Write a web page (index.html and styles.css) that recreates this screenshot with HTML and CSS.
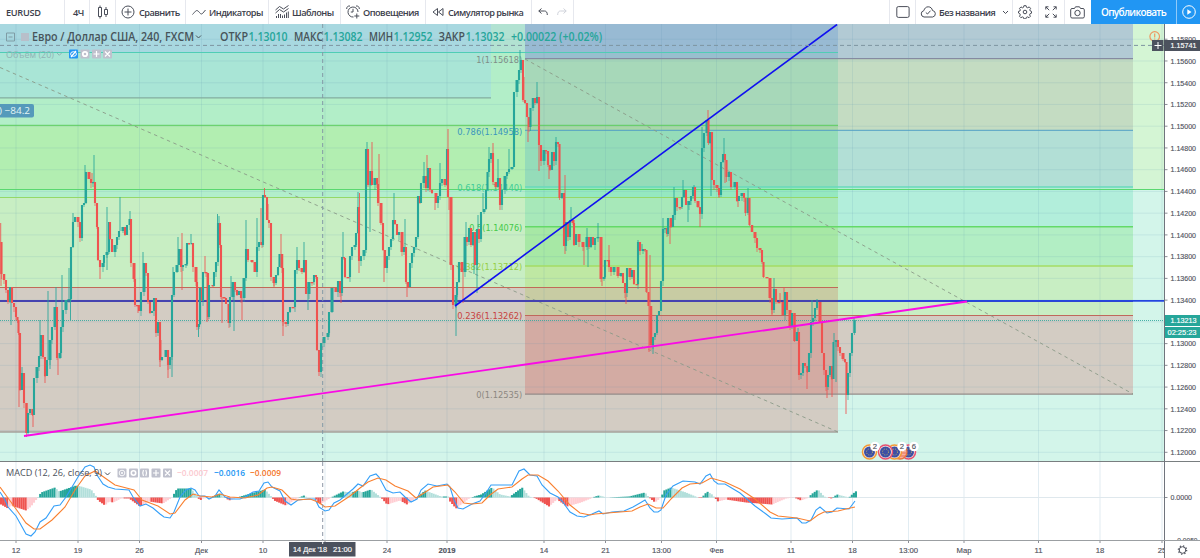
FILE: index.html
```html
<!DOCTYPE html>
<html lang="ru">
<head>
  <meta charset="UTF-8" />
  <meta name="viewport" content="width=device-width, initial-scale=1.0" />
  <title>EURUSD</title>
  <link rel="stylesheet" href="styles.css">
</head>
<body>
  <header class="toolbar">
    <div class="item symbol">EURUSD</div>
    <div class="item interval">4Ч</div>
    <div class="item style">
      <svg width="12" height="14" viewBox="0 0 12 14"><path d="M3 .5v2M3 11.5v2M1.5 2.5h3v9h-3zM9 2v2.500M9 9.500v2.500M7.500 4.500h3v5h-3z"/></svg>
    </div>
    <div class="item compare">
      <svg width="14" height="14" viewBox="0 0 14 14"><circle cx="7" cy="7" r="6"/><path d="M7 3.500v7M3.500 7h7"/></svg>
      <span>Сравнить</span>
    </div>
    <div class="item indicators">
      <svg width="14" height="8" viewBox="0 0 14 8"><path d="M.5 6.500C3 4 4 1.500 6 3s2.500 4 4.500 2.500L13.500 2"/></svg>
      <span>Индикаторы</span>
    </div>
    <div class="item templates">
      <svg width="14" height="14" viewBox="0 0 14 14"><path d="M.5 5l4-3.500 4 2.500 5-3.500M.5 8l4-3.500 4 2.500 5-3.500M1.500 13v-2M3.500 13v-4M5.500 13V9M7.500 13v-2.500M9.500 13V9.500M11.500 13V7.500M13.300 13V6.500"/></svg>
      <span>Шаблоны</span>
    </div>
    <div class="item alerts">
      <svg width="14" height="14" viewBox="0 0 14 14"><path d="M12 7a5 5 0 1 0-4.500 5M7 3.800V7H4.800M.7 4C.5 2 2 .7 4 1M10 1c2-.3 3.500 1 3.300 3M10.800 8.500v5M8.300 11h5"/></svg>
      <span>Оповещения</span>
    </div>
    <div class="item replay">
      <svg width="12" height="10" viewBox="0 0 12 10"><path d="M5.500 1.500v7L1 5zM11 1.500v7L6.500 5z"/></svg>
      <span>Симулятор рынка</span>
    </div>
    <div class="item history">
      <svg width="10" height="8" viewBox="0 0 10 8"><path d="M3.500 .5L.8 3l2.700 2.500M.8 3h5.700C8.500 3 9.300 4.500 9.300 7"/></svg>
      <svg class="off" width="10" height="8" viewBox="0 0 10 8"><path d="M6.500 .5L9.200 3 6.500 5.500M9.200 3H3.500C1.500 3 .7 4.500 .7 7"/></svg>
    </div>
    <div class="item spacer"></div>
    <div class="item layout">
      <svg width="14" height="12" viewBox="0 0 14 12"><rect x=".8" y=".6" width="12.300" height="10.800" rx="1.500"/></svg>
    </div>
    <div class="item name">
      <svg width="17" height="12" viewBox="0 0 17 12"><path d="M4 11a3.200 3.200 0 0 1-.2-6.300C4.500 2.300 6 .8 8.200 .8c2.300 0 3.900 1.500 4.300 3.700a3.300 3.300 0 0 1 .2 6.500zM5.800 6.500L7.500 8l3-3.300"/></svg>
      <span>Без названия</span>
      <svg class="chevron" width="7" height="5" viewBox="0 0 7 5"><path d="M1 1l2.500 2.500L6 1"/></svg>
    </div>
    <div class="item settings">
      <svg width="14" height="14" viewBox="0 0 14 14"><path d="M5.900 .7h2.200l.4 1.600 1.200.5 1.500-.9 1.400 1.500-.8 1.400.5 1.200 1.200.4v1.800l-1.400.5-.5 1.200.8 1.400-1.400 1.400-1.400-.8-1.300.5-.4 1.500H5.900l-.4-1.500-1.200-.5-1.400.8-1.400-1.400.8-1.400-.5-1.200L.5 8V6.400l1.400-.4.4-1.200-.8-1.400L3 1.900l1.400.9 1.100-.5z"/><circle cx="7" cy="7" r="1.800"/></svg>
    </div>
    <div class="item full">
      <svg width="12" height="12" viewBox="0 0 12 12"><path d="M.8 3.500V.8h2.700M.8 .8l3.400 3.400M8.500 .8h2.700v2.700M11.200 .8L7.800 4.200M.8 8.500v2.700h2.700M.8 11.200l3.400-3.400M8.500 11.200h2.700V8.500M11.200 11.200L7.800 7.800"/></svg>
    </div>
    <div class="item camera">
      <svg width="15" height="13" viewBox="0 0 15 13"><path d="M2 2.500h2.500L5.500 .8h4l1 1.700H13c.8 0 1.300.5 1.300 1.300v6.900c0 .8-.5 1.300-1.300 1.300H2C1.200 12 .7 11.500 .7 10.700V3.800C.7 3 1.200 2.500 2 2.500z"/><circle cx="7.500" cy="7" r="2.700"/></svg>
    </div>
    <div class="item publish">Опубликовать</div>
    <div class="item play">
      <svg width="14" height="14" viewBox="0 0 14 14"><circle cx="7" cy="7" r="6.300"/><path class="solid" d="M5.300 4.300v5.400L9.500 7z"/></svg>
    </div>
  </header>

  <main class="chart">
    <svg class="pane" id="price" viewBox="0 24 1164 437" width="1164" height="437"></svg>
    <svg class="axis" id="priceAxis" viewBox="1164 24 36 437" width="36" height="437"></svg>
    <svg class="pane" id="macd" viewBox="0 461 1164 80" width="1164" height="80"></svg>
    <svg class="axis" id="macdAxis" viewBox="1164 461 36 80" width="36" height="80"></svg>
    <svg class="pane" id="time" viewBox="0 541 1164 17" width="1164" height="17"></svg>
    <svg class="axis" id="corner" viewBox="1164 541 36 17" width="36" height="17"></svg>
  </main>

  <script src="chart.js"></script>
</body>
</html>
```

FILE: styles.css
```css
* {
  box-sizing: border-box;
}
body {
  margin: 0;
  height: 558px;
  overflow: hidden;
  background: white;
  font-family: "Open Sans", "Noto Sans", sans-serif;
  color: #3c404b;
}
.toolbar {
  display: flex;
  height: 24px;
  font-size: 9.200px;
  font-weight: 600;
  letter-spacing: -0.520px;
}
.item {
  display: flex;
  align-items: center;
  gap: 4px;
  flex: none;
  padding-left: 6px;
  border-right: 1px solid #e6e8ee;
  white-space: nowrap;
}
.item svg {
  flex: none;
  fill: none;
  stroke: #4a4e59;
  stroke-width: 1;
}
.item svg.off {
  stroke: #cfd2da;
}
.symbol { width: 65px; letter-spacing: -0.300px; }
.interval { width: 25px; padding-left: 8px; }
.style { width: 26px; padding-left: 7px; }
.compare { width: 70px; padding-left: 5px; }
.indicators { width: 83px; gap: 3px; }
.templates { width: 72px; gap: 3px; }
.alerts { width: 85px; padding-left: 5px; gap: 3px; }
.replay { width: 106px; }
.history { width: 42px; padding-left: 6px; gap: 9px; }
.spacer { flex: 1; }
.layout { width: 26px; }
.name { width: 97px; padding-left: 4px; gap: 2px; }
.name .chevron { margin-left: auto; margin-right: 3px; }
.settings { width: 26px; padding-left: 5px; }
.full { width: 26px; }
.camera { width: 26px; padding-left: 5px; border: none; }
.publish {
  width: 86px;
  padding-left: 10px;
  background: #2196f3;
  border-color: #90caf9;
  color: white;
  font-size: 10px;
  letter-spacing: -0.680px;
}
.play {
  width: 23px;
  padding-left: 5px;
  background: #2196f3;
  border: none;
}
.play svg { stroke: white; }
.play .solid { fill: white; stroke: none; }

.chart {
  display: grid;
  grid-template-columns: 1164px 36px;
  grid-template-rows: 437px 80px 17px;
}
.chart svg {
  display: block;
  overflow: hidden;
}
.tick-label {
  font-family: "Liberation Sans", sans-serif;
  font-size: 7.700px;
  fill: #50535e;
  stroke: #50535e;
  stroke-width: 0.150px;
}
.light {
  fill: white;
  stroke: white;
}
.bold { font-weight: bold; }
.middle { text-anchor: middle; }
.fib {
  font-family: "DejaVu Sans", sans-serif;
  font-size: 8.500px;
  text-anchor: end;
}
.title {
  font-size: 11.800px;
  font-weight: 600;
}
.study {
  font-size: 9.600px;
  font-weight: 500;
}
.value { font-weight: 600; }
.line { fill: none; }
```

FILE: chart.js
```js
const NS = "http://www.w3.org/2000/svg";
const get = (id) => document.getElementById(id);

function add(parent, tag, attrs, text) {
  const el = document.createElementNS(NS, tag);
  for (const key in attrs) el.setAttribute(key, attrs[key]);
  if (text !== undefined) el.textContent = text;
  parent.appendChild(el);
  return el;
}
const rect = (p, x1, y1, x2, y2, fill) =>
  add(p, "rect", { x: x1, y: y1, width: x2 - x1, height: y2 - y1, fill });
const line = (p, x1, y1, x2, y2, stroke, width = 1, dash = "none") =>
  add(p, "line", { x1, y1, x2, y2, stroke, "stroke-width": width, "stroke-dasharray": dash });
// text stretched to a known width
const label = (p, x, y, cls, fill, text, width) => {
  const attrs = { x, y, class: cls };
  if (fill) attrs.fill = fill;
  if (width) { attrs.textLength = width; attrs.lengthAdjust = "spacingAndGlyphs"; }
  return add(p, "text", attrs, text);
};

const price = get("price"), priceAxis = get("priceAxis");
const macd = get("macd"), macdAxis = get("macdAxis");
const time = get("time"), corner = get("corner");
const priceY = (v) => 452.3 - (v - 1.12) * 10870;

const times = [
  [16, "12"], [78, "19"], [139.5, "26"], [201.5, "Дек"], [263, "10"], [325, ""],
  [387, "24"], [447, "2019"], [544, "14"], [605.5, "21"], [661.5, "13:00"],
  [716.500, "Фев"], [791, "11"], [852.5, "18"], [908.5, "13:00"], [964, "Мар"],
  [1038.5, "11"], [1100, "18"], [1162, "25"]
];

// fib zones: x range, then [top, colour] going down
const zones = [
  [0, 491, [[24, "#a8d8e0"], [53, "#a9e5d6"], [98, "#b2eec8"], [125, "#b2eeb1"], [190, "#b2eecb"], [197, "#c8eec3"], [288, "#d3ccc3"], [432, "#d3f5ea"]]],
  [491, 525, [[24, "#b2e2d2"], [53, "#b2eec8"], [125, "#b2eeb1"], [190, "#b2eecb"], [197, "#c8eec3"], [288, "#d3ccc3"], [432, "#d3f5ea"]]],
  [525, 838, [[24, "#98bad3"], [53, "#98bfce"], [59, "#a7d8b9"], [125, "#a7d8a7"], [130, "#95dcb9"], [187, "#95e8b8"], [190, "#95e8c0"], [197, "#a7e8b9"], [227, "#a7e8a5"], [266, "#bfe8a3"], [288, "#c8cca3"], [315, "#d3aba3"], [394, "#d3ccc3"], [432, "#d3f5ea"]]],
  [838, 1133, [[24, "#b2cad4"], [59, "#c4dcc2"], [130, "#b2dfd6"], [187, "#b2eed4"], [190, "#b2eedb"], [227, "#b2eec4"], [266, "#c8eec3"], [315, "#d3ccc3"], [394, "#d3f5ea"]]],
  [1133, 1164, [[24, "#d4f5d4"], [190, "#d3f5ea"]]]
];
for (const [x1, x2, rows] of zones) {
  rows.forEach(([top, fill], i) => {
    rect(price, x1, top, x2, rows[i + 1] ? rows[i + 1][0] : 461, fill);
  });
}

// grid
for (const [x] of times) {
  rect(price, x - 0.5, 24, x + 0.5, 461, "rgba(90,150,175,.14)");
  rect(macd, x - 0.5, 462, x + 0.5, 540, "#e1ecf2");
}
for (let v = 1.12; v < 1.1585; v += 0.002) {
  rect(price, 0, priceY(v) - 0.5, 1164, priceY(v) + 0.5, "rgba(90,150,175,.14)");
}

// fib levels
line(price, 0, 52.5, 838, 52.5, "#50cdb5");
line(price, 0, 97.8, 491, 97.8, "#83ad9f", 1.3);
line(price, 0, 125.3, 838, 125.3, "#5ccc60");
line(price, 0, 189.5, 1164, 189.5, "#5ad870");
line(price, 0, 197.5, 838, 197.5, "#95d868");
line(price, 0, 287.5, 838, 287.5, "#c06a58");
line(price, 0, 432, 838, 432, "#a5a29d", 1.4);
line(price, 525, 58.6, 1133, 58.6, "#858aa0", 1.2);
line(price, 525, 130.3, 1133, 130.3, "#529fc5");
line(price, 525, 187, 1133, 187, "#68d8bd", 1.4);
line(price, 525, 226.7, 1133, 226.7, "#64d968", 1.4);
line(price, 525, 266, 1133, 266, "#a4dc64", 1.4);
line(price, 525, 315.5, 1133, 315.5, "#c0685c", 1.2);
line(price, 525, 394.2, 1133, 394.2, "#958b89", 1.3);

line(price, 0, 67.5, 838, 432, "#8a9a88", 0.9, "3.500 3.500");
line(price, 525, 59, 1133, 394, "#8a9a88", 0.9, "3.500 3.500");
line(price, 0, 301, 1133, 301, "#4543b0", 1.9);
line(price, 838, 300.8, 1164, 300.8, "#2446e0", 1.8);
line(price, 0, 320.5, 1164, 320.5, "#35a99f", 0.9, "1 1");

[
  [62.5, "1(1.15618)", "#7f8d88", 46], [134.5, "0.786(1.14958)", "#3b96bd", 65],
  [191, "0.618(1.14440)", "#3fcc99", 65], [230.5, "0.5(1.14076)", "#45c94a", 53],
  [270, "0.382(1.13712)", "#97cf45", 65], [319, "0.236(1.13262)", "#c7433f", 65],
  [398, "0(1.12535)", "#8c8781", 46]
].forEach(([y, text, fill, w]) => label(price, 522.3, y, "fib", fill, text, w));

// closing path of the bars, [x, y]
const path = [
  [0,242],[1.5,274],[4,280],[6,290],[8,302],[10,287],[12,303],[14,307],[16,317],[17.5,320],[18.5,333],[20,390],[22,373],[24,403],[26.5,433],[28,413],[30,409],[32.5,415],
  [34,378],[37,367],[39,356],[41,335],[43,357],[45,376],[47,360],[50,340],[52,327],[55,307],[57,358],[60,353],[61,327],[63,310],[66,300],[69,299],[71,247],[73,222],
  [75,217],[78,222],[80,238],[82,205],[84,203],[86,172],[89,179],[91,183],[93,182],[95,203],[97,227],[98,260],[100,267],[103,263],[104,255],[107,252],[109,222],[110,239],
  [112,252],[115,245],[117,237],[119,231],[123,227],[125,235],[127,225],[130,219],[131,263],[134,279],[135,305],[137,305],[139,311],[141,292],[144,263],[146,273],[148,302],
  [150,313],[152,311],[154,298],[156,333],[158,322],[160,360],[162,357],[166,350],[168,365],[170,357],[172,295],[174,272],[177,265],[179,249],[181,267],[183,265],[186,264],
  [187,243],[189,244],[192,243],[193,267],[196,282],[197,327],[199,324],[200,288],[202,301],[203,272],[206,273],[208,317],[209,285],[213,286],[214,272],[216,262],[218,223],
  [220,245],[221,297],[224,298],[226,304],[229,323],[230,297],[233,282],[235,290],[237,295],[239,291],[241,298],[244,278],[246,249],[248,260],[252,262],[255,272],[257,247],
  [259,242],[262,245],[263,195],[265,197],[267,220],[269,223],[271,277],[274,283],[276,275],[278,267],[279.5,254],[282,268],[283,322],[286,324],[288,312],[290,307],[293,307],
  [295,270],[297,260],[299,268],[302,272],[304,260],[306,294],[309,282],[312,282],[314,275],[316,277],[317,350],[319,372],[321,343],[324,337],[328,333],[329,312],[332,288],
  [336,292],[338,281],[340,293],[342,257],[344,258],[345,277],[348,277],[350,256],[352,247],[355,245],[356,233],[358,207],[359,261],[361,256],[364,250],[366,149],[368,185],
  [371,171],[372,185],[375,178],[377,184],[378,203],[381,223],[383,250],[385,268],[387,256],[389,247],[391,239],[393,220],[395,224],[397,235],[399,232],[402,252],[404,247],
  [406,282],[408,287],[410,263],[412,253],[414,247],[416,237],[418,196],[420,203],[421,183],[424,176],[426,188],[428,168],[430,190],[432,193],[436,203],[438,196],[440,183],
  [442,179],[445,185],[447,149],[448,197],[451,265],[453,305],[456,295],[457,282],[459,262],[462,272],[465,237],[467,242],[469,228],[471,245],[473,232],[475,265],[477,229],
  [479,239],[481,212],[484,209],[486,190],[487.5,172],[489,159],[491,153],[493,182],[496,187],[498,178],[500,205],[502,190],[505,176],[507,172],[509,169],[512,167],[514,92],
  [517,80],[519,70],[521,60],[523,100],[525,103],[527,117],[529,127],[530.5,108],[533,98],[535,103],[537,97],[539,145],[541,161],[544,150],[546,151],[548,165],[550,170],
  [552,152],[554,161],[556,142],[558,144],[559.5,198],[562,193],[564,246],[566,222],[568,237],[570,220],[573,223],[574,245],[576,234],[579,242],[583,247],[587,237],[589,247],
  [591,237],[593,245],[595,238],[598,237],[601,279],[604,277],[605,260],[608,260],[609,267],[611,272],[614,267],[618,276],[621,273],[623,283],[625,293],[627,268],[630,277],
  [632,270],[634,284],[637,284],[638,242],[640,251],[643,249],[645,250],[646.5,292],[648.5,306],[651,345],[653,337],[655,333],[657,315],[659,311],[661,281],[663,229],
  [665,228],[667,234],[668,218],[671,227],[673,215],[675,198],[677,207],[680,207],[682,197],[684,190],[686,205],[689,201],[691,196],[693,187],[695,201],[698,207],[700,214],
  [702,148],[704,133],[707,120],[708.5,143],[710,132],[712,180],[714,185],[717,188],[719,195],[721,162],[723,154],[725,160],[726.5,177],[729,172],[731,187],[735,182],
  [737,201],[739,196],[742,193],[744,198],[745.5,213],[748,198],[749.5,225],[752,232],[755,238],[757,248],[760,250],[762,262],[763.5,277],[767,278],[770,298],[772,310],
  [774,289],[776,302],[779,302],[783,315],[785,292],[787,310],[790,327],[792,313],[794.5,341],[797,332],[799,375],[801,373],[803,363],[805,366],[807.5,372],[809,353],
  [811,322],[813,318],[815,308],[817,302],[820,322],[822,353],[824,370],[826,387],[828,375],[830,366],[832,379],[833.5,342],[836,340],[838,347],[840,353],[843,359],
  [845,362],[846.5,395],[848,373],[850,353],[852,333],[854.5,320]
];
// long shadows, [x, y of the tip]
const tips = [
  [.7,223],[1,286],[11,325],[19,407],[22,367],[33,427],[40,320],[45,383],[48,291],[50,369],[56,287],[58,375],[62,275],[69,268],[70.5,320],[73,213],[85,165],[94,155],[92,173],
  [100,279],[107,207],[107,270],[120,197],[130,211],[143,252],[138,313],[160,367],[161,340],[168,378],[172,377],[173,267],[178,237],[182,233],[182,290],[191,234],[198.5,337],
  [205,256],[207,322],[217.5,214],[219,216],[222,323],[234,331],[231,276],[242,320],[246,220],[257,218],[261,208],[264.5,188],[268,204],[274,287],[283,336],[281,234],
  [297,247],[304,242],[308,310],[319,376],[322,348],[341,303],[343,232],[358,192],[359.5,193],[359,273],[367,142],[372,142],[370,232],[379,154],[384,282],[394,193],[405,219],
  [407,297],[424,162],[427,155],[435,210],[440,163],[448,129],[456,336],[449,210],[463,303],[466,222],[478,215],[474,274],[477,293],[483,193],[489,147],[493,143],[498,159],
  [500,210],[509,149],[520,50],[524,77],[528,142],[537,82],[539,171],[549,179],[556,137],[565,175],[565,254],[571,207],[584,265],[588,267],[587,228],[598,223],[602,286],
  [609,245],[626,304],[638,240],[642,244],[649,352],[650,255],[653,354],[663,218],[670,244],[674,187],[683,180],[688,222],[694,185],[700,227],[702,127],[708,110],[711,196],
  [719,197],[724,138],[725,183],[738,207],[748,188],[772,316],[774,278],[784,287],[780,293],[798,328],[807,389],[812,300],[817,299],[827,398],[832,397],[834,333],[836,382],
  [846,414],[854,317]
];
const UP = "#26a69a", DOWN = "#ef5350";

for (const [x, y] of tips) {
  let best = 1;
  path.forEach((p, i) => { if (i && Math.abs(p[0] - x) < Math.abs(path[best][0] - x)) best = i; });
  line(price, x, y, x, path[best][1], path[best][1] < path[best - 1][1] ? UP : DOWN, 1).setAttribute("opacity", .85);
}
for (let i = 1; i < path.length; i++) {
  const [x, close] = path[i], open = path[i - 1][1];
  const color = close < open ? UP : DOWN;
  const top = Math.min(open, close), bottom = Math.max(open, close);
  const half = Math.max(1.05, Math.min(1.5, (x - path[i - 1][0]) / 2));
  line(price, x, top - (i * 7) % 7, x, bottom + (i * 5) % 6, color, 1).setAttribute("opacity", .65);
  rect(price, x - half, top, x + half, Math.max(bottom, top + 1.3), color);
}

// trend lines
line(price, 455, 306, 837, 24.5, "#1010f0", 1.6);
line(price, 24, 436, 967, 301.5, "#fa0ae6", 1.8);

// crosshair
line(price, 0, 45.4, 1164, 45.4, "#7e94a0", 1, "4 3");
line(price, 322.7, 24, 322.7, 461, "#8298a5", 1, "4 3");

// main legend
add(price, "path", { d: "M6.500 33h8v8h-8zM8.500 37h4", class: "line", stroke: "#7f9ca5" });
rect(price, 21, 33, 29, 41, "#b8bfca");
label(price, 32, 41.3, "title", "#47545a", "Евро / Доллар США, 240, FXCM", 162);
add(price, "path", { d: "M196 35.500l2.500 2.500 2.500-2.500", class: "line", stroke: "#47545a" });
[
  [220, "ОТКР", 28, "#47545a"], [248.5, "1.13010", 39, UP], [294, "МАКС", 29, "#47545a"],
  [323.5, "1.13082", 39, UP], [369, "МИН", 24, "#47545a"], [393.5, "1.12952", 39, UP],
  [438.5, "ЗАКР", 26.500, "#47545a"], [465.5, "1.13032", 39, UP], [511, "+0.00022 (+0.02%)", 91, UP]
].forEach(([x, text, w, fill]) => label(price, x, 41.3, "title", fill, text, w));

label(price, 6, 57.5, "study", "#91b3b5", "Объём (20)", 48);
add(price, "path", { d: "M57 53l2.300 2.300L61.600 53", class: "line", stroke: "#91b3b5" });
function buttons(parent, xs, y, first) {
  xs.forEach((x, i) => {
    add(parent, "rect", { x, y, width: 9, height: 9, rx: 1, fill: i || !first ? "#bfc1cd" : first });
  });
}
buttons(price, [69, 80.5, 92, 103], 49.5, "#2196f3");
const white = { class: "line", stroke: "#fff", "stroke-width": 1.2 };
add(price, "path", { ...white, d: "M71 57l5-6M93.500 54h6M96.500 51v6M105 51.500l5 5M110 51.500l-5 5" });
add(price, "ellipse", { ...white, cx: 73.5, cy: 54, rx: 2.900, ry: 2.300, "stroke-width": 1 });
add(price, "circle", { ...white, cx: 85, cy: 54, r: 2.2, "stroke-width": 1.8 });

add(price, "rect", { x: -4, y: 104, width: 38, height: 13.500, rx: 2, fill: "#559abb" });
label(price, -1, 113.8, "study", "#e3f5f4", ") −84.2", 31);

// warning sign and the plus at the crosshair
add(price, "circle", { cx: 1154.7, cy: 36.5, r: 4.8, class: "line", stroke: "#ee9760", "stroke-width": 1.2 });
line(price, 1154.7, 33.500, 1154.7, 37.5, "#ee9760", 1.2);
line(price, 1154.7, 38.500, 1154.7, 39.5, "#ee9760", 1.2);
rect(price, 1152, 40, 1163.5, 51, "#4c525e");
add(price, "path", { d: "M1154.500 45.500h7M1158 42v7", class: "line", stroke: "#fff" });

// economic events
function flag(x, ring) {
  add(price, "circle", { cx: x, cy: 452, r: 7, fill: "#f2ece4", stroke: ring, "stroke-width": 1.500 });
  add(price, "circle", { cx: x, cy: 452, r: 5.500, fill: "#3d4fa4" });
  add(price, "circle", { cx: x, cy: 452, r: 3, class: "line", stroke: "#cdbd60", "stroke-width": .9, "stroke-dasharray": "1 1.400" });
}
flag(908.5, "#e85070");
add(price, "circle", { cx: 900, cy: 452, r: 7, fill: "#f5b29c", stroke: "#e9743c", "stroke-width": 1.3 });
add(price, "path", { d: "M895 450h10M896 453h10M896 456h9", stroke: "#e66d62" });
flag(894.5, "#f49a35");
flag(885.5, "#e85070");
flag(869.5, "#f49a35");
[[875, "2"], [902, "2"], [914, "6"]].forEach(([x, n]) => {
  add(price, "circle", { cx: x, cy: 446.5, r: 4.8, fill: "#fff" });
  label(price, x, 449.3, "tick-label middle", null, n);
});

// price axis
rect(priceAxis, 1164, 24, 1165, 461, "#70747d");
for (let v = 1.12; v < 1.1585; v += 0.002) {
  if (Math.abs(v - 1.132) < 0.0001) continue;
  line(priceAxis, 1165, priceY(v), 1167.5, priceY(v), "#8b8e96");
  label(priceAxis, 1170.5, priceY(v) + 2.8, "tick-label", null, v.toFixed(3) + "00", 25.5);
}
rect(priceAxis, 1164, 40, 1200, 51, "#4c525e");
label(priceAxis, 1170.5, 48.2, "tick-label light", null, "1.15741", 26);
rect(priceAxis, 1165, 315, 1200, 326, UP);
label(priceAxis, 1170.5, 323.2, "tick-label light", null, "1.13213", 26);
rect(priceAxis, 1165, 327, 1200, 338, UP);
label(priceAxis, 1167.5, 335.2, "tick-label light", null, "02:25:23", 29);

// macd
line(macd, 0, 461.5, 1164, 461.5, "#797e80");
line(macd, 0, 497.5, 1164, 497.5, "#dfe8ed");
const hist = [
  [0,-7],[7,-11],[10,-8],[16,-10],[25,-13],[30,-9],[37,0],[40,5],[54,10],[58,6],[75,12],[80,11],[90,8],[96,0],[97,-3],[104,-8],[108,-4],[112,-5],[120,-1],[128,-1],
  [139,-9],[148,-4],[162,-6],[171,0],[176,9],[190,9],[196,1],[199,-3],[202,-1],[210,0],[218,4],[224,0],[228,-3],[236,0],[246,3],[264,8],[271,0],[273,-3],[285,-8],[298,0],
  [303,2],[306,0],[314,0],[318,-7],[322,-5],[330,0],[342,6],[350,5],[357,7],[361,5],[370,8],[380,0],[386,-7],[399,-3],[406,-7],[417,1],[424,7],[440,1],[447,1],[449,-4],
  [455,-11],[468,-1],[473,1],[480,3],[491,10],[499,3],[509,1],[521,10],[528,1],[535,-1],[548,-9],[556,-2],[566,-9],[580,-5],[590,-1],[594,1],[598,2],[606,0],[628,1],
  [644,5],[648,0],[654,-5],[660,0],[663,7],[670,10],[685,5],[697,0],[700,-1],[706,6],[711,3],[717,-4],[725,-2],[745,-5],[771,-7],[785,-1],[793,0],[800,-3],[808,0],
  [810,3],[817,8],[823,1],[830,-1],[836,3],[848,0],[852,4],[856,7]
];
let prev = 0;
for (let x = 0, k = 0; x < 855; x += 2.06) {
  while (k < hist.length - 2 && hist[k + 1][0] < x) k++;
  const [x1, h1] = hist[k], [x2, h2] = hist[k + 1];
  const h = h1 + (h2 - h1) * (x - x1) / (x2 - x1);
  const fill = h > 0 ? (h >= prev ? UP : "#b2dfdb") : (h <= prev ? "#ef5350" : "#ffcdd2");
  rect(macd, x, h > 0 ? 497.5 - h : 497.5, x + 2.1, h > 0 ? 497.5 : 497.5 - h, fill);
  prev = h;
}
const fast = "0,492 5,500 8,507 16,516 21,525 26,534 31,536 35,532 40,522 46,518 54,506 60,505 66,497 72,487 78,477 85,467 90,465 94,467 97,475 103,484 108,487 115,489 129,490 133,497 140,506 146,504 153,508 160,514 164,517 170,518 174,512 180,497 186,490 191,488 195,490 199,496 205,496 209,499 215,496 219,490 225,497 230,499 240,499 245,497 253,492 259,491 264,483 268,482 272,487 280,491 285,501 291,505 298,500 308,499 315,499 319,507 325,511 329,510 334,503 340,500 347,494 353,489 358,484 363,486 370,476 376,474 379,477 386,490 393,493 400,492 405,497 411,502 417,499 421,490 428,484 437,486 447,484 450,487 454,500 458,508 463,509 472,504 480,501 486,493 491,485 497,485 512,485 519,471 524,469 530,475 537,476 542,485 550,493 558,497 562,501 570,512 577,516 584,517 592,514 599,511 603,514 612,512 624,511 633,507 640,503 645,500 650,508 654,512 658,512 661,510 666,495 673,486 683,481 695,482 700,484 706,476 710,474 714,481 718,484 725,484 740,493 755,506 766,514 771,518 782,519 797,518 802,523 806,523 811,520 816,510 820,507 827,513 832,512 837,508 849,509 855,501";
const slow = "0,487 8,498 16,509 26,523 34,529 40,529 52,520 65,507 75,490 85,476 95,471 105,478 115,485 134,490 142,500 158,506 170,514 175,513 185,500 193,494 200,496 212,497 220,494 230,497 245,498 258,495 267,488 272,487 282,490 291,499 297,500 310,499 318,502 325,507 335,506 350,496 360,488 368,482 378,478 386,480 395,486 408,491 416,498 424,493 433,487 448,485 455,492 464,503 472,504 482,503 490,495 498,489 512,487 522,479 528,475 538,475 548,481 558,491 570,505 580,513 590,515 595,514 620,512 632,511 640,507 648,504 656,508 663,508 672,498 682,488 690,484 702,483 711,478 725,482 740,489 755,499 770,512 778,516 797,518 810,521 818,515 824,512 838,511 846,509 855,507";
add(macd, "polyline", { points: fast, class: "line", stroke: "#349ff8", "stroke-width": 1.1 });
add(macd, "polyline", { points: slow, class: "line", stroke: "#f98030", "stroke-width": 1.1 });
line(macd, 322.7, 462, 322.7, 541, "#8d97a5", 1, "4 3");
label(macd, 6, 476.3, "study", "#4b4f5a", "MACD (12, 26, close, 9)", 96);
add(macd, "path", { d: "M105 472.500l2.500 2.500 2.500-2.500", class: "line", stroke: "#4b4f5a" });
buttons(macd, [117.5, 129, 140, 151.5, 163], 468.5);
add(macd, "circle", { ...white, cx: 122, cy: 473, r: 2.8, "stroke-width": .9 });
add(macd, "circle", { cx: 122, cy: 473, r: 1, fill: "#fff" });
add(macd, "circle", { ...white, cx: 133.5, cy: 473, r: 2.2, "stroke-width": 1.6 });
add(macd, "path", { ...white, d: "M143.500 470q-1.500 3 0 6M145.800 470q1.500 3 0 6M153 473h6M156 470v6M165 470.500l5 5M170 470.500l-5 5" });
label(macd, 177, 476.3, "study value", "#fbc9cf", "−0.0007", 31);
label(macd, 214, 476.3, "study value", "#2196f3", "−0.0016", 31);
label(macd, 250, 476.3, "study value", "#f5782a", "−0.0009", 31);
rect(macd, 0, 540, 1164, 541, "#9b9fa2");

line(macdAxis, 1164, 461.5, 1200, 461.5, "#797e80");
rect(macdAxis, 1164, 461, 1165, 541, "#70747d");
line(macdAxis, 1165, 497.5, 1167.5, 497.5, "#8b8e96");
label(macdAxis, 1170.5, 500.2, "tick-label", null, "0.0000", 21.5);
label(macdAxis, 1173.5, 543, "tick-label", null, "−0.0050", 24);
line(macdAxis, 1164, 540.5, 1200, 540.5, "#9b9fa2");

// time axis
for (const [x, text] of times) {
  line(time, x, 541, x, 543, "#8b8e96");
  label(time, x, 553.3, "tick-label middle" + (text === "2019" ? " bold" : ""), null, text);
}
rect(time, 289, 542, 355.5, 556.5, "#4c525e");
line(time, 322.7, 542, 322.7, 544, "#fff");
label(time, 293, 552.2, "tick-label light", null, "14 Дек '18", 34);
label(time, 333, 552.2, "tick-label light", null, "21:00", 19);

rect(corner, 1164, 541, 1165, 558, "#70747d");
add(corner, "circle", { cx: 1182.5, cy: 550, r: 3.3, class: "line", stroke: "#4a4e59", "stroke-width": 1 });
add(corner, "circle", { cx: 1182.5, cy: 550, r: 4.2, class: "line", stroke: "#4a4e59", "stroke-width": 1.200, "stroke-dasharray": "1.300 2" });
```
